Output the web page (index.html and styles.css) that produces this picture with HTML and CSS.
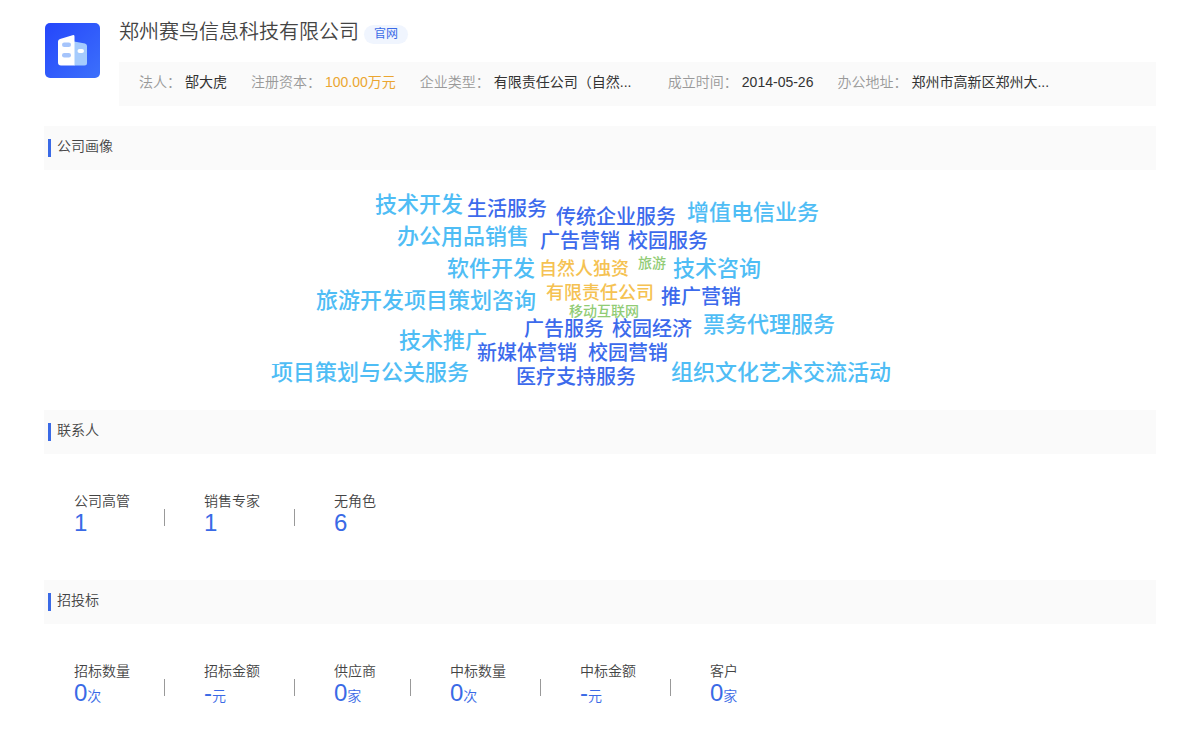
FILE: index.html
```html
<!DOCTYPE html>
<html lang="zh-CN">
<head>
<meta charset="utf-8">
<title>郑州赛鸟信息科技有限公司</title>
<link rel="stylesheet" href="styles.css">
</head>
<body>
<main class="page">
  <header class="company">
    <svg class="logo" viewBox="0 0 55 55" aria-hidden="true">
      <defs>
        <linearGradient id="tile" x1="0" y1="0" x2="1" y2="1">
          <stop offset="0" stop-color="#2546fb"/>
          <stop offset="1" stop-color="#3c70fb"/>
        </linearGradient>
      </defs>
      <rect width="55" height="55" rx="5" fill="url(#tile)"/>
      <path d="M29 18.500 40 20.500Q42 21 42 23V40Q42 42.500 39.500 42.500H29Z" fill="#a5cbfd"/>
      <path d="M13 18.500Q13 16.500 15 16L27.500 12.200Q29.500 11.600 29.500 13.500V42.500H16Q13 42.500 13 39.500Z" fill="#fff"/>
      <rect x="17" y="19.500" width="9" height="4.500" rx="2.200" fill="#a5c4fb"/>
      <rect x="17" y="30" width="9" height="4.500" rx="2.200" fill="#a5c4fb"/>
      <rect x="32.500" y="26" width="6.500" height="4" rx="2" fill="#fff"/>
    </svg>
    <div class="company-main">
      <div class="title-row">
        <h1 class="name">郑州赛鸟信息科技有限公司</h1>
        <a class="site" href="#">官网</a>
      </div>
      <dl class="info">
        <div class="field"><dt>法人：</dt><dd>郜大虎</dd></div>
        <div class="field"><dt>注册资本：</dt><dd class="money">100.00万元</dd></div>
        <div class="field"><dt>企业类型：</dt><dd class="long">有限责任公司（自然...</dd></div>
        <div class="field"><dt>成立时间：</dt><dd>2014-05-26</dd></div>
        <div class="field"><dt>办公地址：</dt><dd class="long">郑州市高新区郑州大...</dd></div>
      </dl>
    </div>
  </header>

  <section>
    <h2 class="heading">公司画像</h2>
    <div class="cloud">
      <span class="word sky w1">技术开发</span>
      <span class="word blue w2">生活服务</span>
      <span class="word blue w3">传统企业服务</span>
      <span class="word sky w4">增值电信业务</span>
      <span class="word sky w5">办公用品销售</span>
      <span class="word blue w6">广告营销</span>
      <span class="word blue w7">校园服务</span>
      <span class="word sky w8">软件开发</span>
      <span class="word gold w9">自然人独资</span>
      <span class="word green w10">旅游</span>
      <span class="word sky w11">技术咨询</span>
      <span class="word sky w12">旅游开发项目策划咨询</span>
      <span class="word gold w13">有限责任公司</span>
      <span class="word blue w14">推广营销</span>
      <span class="word green w15">移动互联网</span>
      <span class="word blue w16">广告服务</span>
      <span class="word blue w17">校园经济</span>
      <span class="word sky w18">票务代理服务</span>
      <span class="word sky w19">技术推广</span>
      <span class="word blue w20">新媒体营销</span>
      <span class="word blue w21">校园营销</span>
      <span class="word sky w22">项目策划与公关服务</span>
      <span class="word blue w23">医疗支持服务</span>
      <span class="word sky w24">组织文化艺术交流活动</span>
    </div>
  </section>

  <section>
    <h2 class="heading">联系人</h2>
    <dl class="stats">
      <div class="stat"><dt>公司高管</dt><dd>1</dd></div>
      <div class="stat"><dt>销售专家</dt><dd>1</dd></div>
      <div class="stat"><dt>无角色</dt><dd>6</dd></div>
    </dl>
  </section>

  <section>
    <h2 class="heading">招投标</h2>
    <dl class="stats">
      <div class="stat"><dt>招标数量</dt><dd>0<small>次</small></dd></div>
      <div class="stat"><dt>招标金额</dt><dd>-<small>元</small></dd></div>
      <div class="stat"><dt>供应商</dt><dd>0<small>家</small></dd></div>
      <div class="stat"><dt>中标数量</dt><dd>0<small>次</small></dd></div>
      <div class="stat"><dt>中标金额</dt><dd>-<small>元</small></dd></div>
      <div class="stat"><dt>客户</dt><dd>0<small>家</small></dd></div>
    </dl>
  </section>
</main>
</body>
</html>
```
FILE: styles.css
```css
* { box-sizing: border-box; }
body {
  margin: 0;
  background: #fff;
  color: #444;
  font: 350 14px/20px "Liberation Sans", "Noto Sans CJK SC", sans-serif;
}
h1, h2, dl, dd { margin: 0; font-weight: 350; }
.page { padding: 16px 44px 0; }

.company { display: flex; gap: 19px; margin-bottom: 20px; }
.logo { flex: none; width: 55px; height: 55px; margin: 7px 0 0 1px; }
.company-main { flex: 1; min-width: 0; }
.title-row { display: flex; gap: 5px; height: 46px; }
.name { font-size: 20px; line-height: 32px; }
.site {
  align-self: flex-start;
  margin-top: 9px;
  padding: 0 10px;
  border-radius: 10px;
  background: #f0f5fe;
  color: #3a6ae6;
  font-size: 12px;
  font-weight: 400;
  line-height: 19px;
  text-decoration: none;
}
.info {
  display: flex;
  gap: 24px;
  padding: 10px 20px 14px;
  background: #fafafa;
  white-space: nowrap;
}
.field { display: flex; gap: 4px; }
.field dt { color: #999; }
.field dd { color: #333; font-weight: 400; }
.field .money { color: #eba631; }
.long { width: 150px; }

.heading {
  display: flex;
  gap: 6px;
  padding: 10px 4px 13px;
  background: #fafafa;
  font-size: 14px;
}
.heading::before {
  content: "";
  width: 3px;
  height: 18px;
  margin-top: 3px;
  background: #3a6ae6;
}

.cloud {
  position: relative;
  width: 640px;
  height: 240px;
  margin: 0 auto;
}
.word { position: absolute; line-height: 26px; font-weight: 500; white-space: nowrap; }
.sky { color: #4fbdf5; font-size: 22px; }
.blue { color: #3c6aec; font-size: 20px; }
.gold { color: #f5c252; font-size: 18px; }
.green { color: #91cc75; font-size: 14px; }
.w1 { left: 95px; top: 22px; }
.w2 { left: 187px; top: 26px; }
.w3 { left: 276px; top: 34px; }
.w4 { left: 407px; top: 30px; }
.w5 { left: 117px; top: 54px; }
.w6 { left: 260px; top: 58px; }
.w7 { left: 348px; top: 58px; }
.w8 { left: 167px; top: 86px; }
.w9 { left: 259px; top: 86px; }
.w10 { left: 358px; top: 80px; }
.w11 { left: 393px; top: 86px; }
.w12 { left: 36px; top: 118px; }
.w13 { left: 266px; top: 110px; }
.w14 { left: 381px; top: 114px; }
.w15 { left: 289px; top: 128px; }
.w16 { left: 244px; top: 146px; }
.w17 { left: 332px; top: 146px; }
.w18 { left: 423px; top: 142px; }
.w19 { left: 119px; top: 158px; }
.w20 { left: 197px; top: 170px; }
.w21 { left: 308px; top: 170px; }
.w22 { left: -9px; top: 190px; }
.w23 { left: 236px; top: 194px; }
.w24 { left: 391px; top: 190px; }

.stats { display: flex; padding: 37px 30px 46px; }
.stat { display: flex; flex-direction: column; position: relative; margin-right: 74px; }
.stat:not(:last-child)::after {
  content: "";
  position: absolute;
  right: -35px;
  top: 18px;
  width: 1px;
  height: 17px;
  background: #999;
}
.stat dd { color: #3a6ae6; font-size: 24px; line-height: 23px; }
.stat small { font-size: 14px; }
```
